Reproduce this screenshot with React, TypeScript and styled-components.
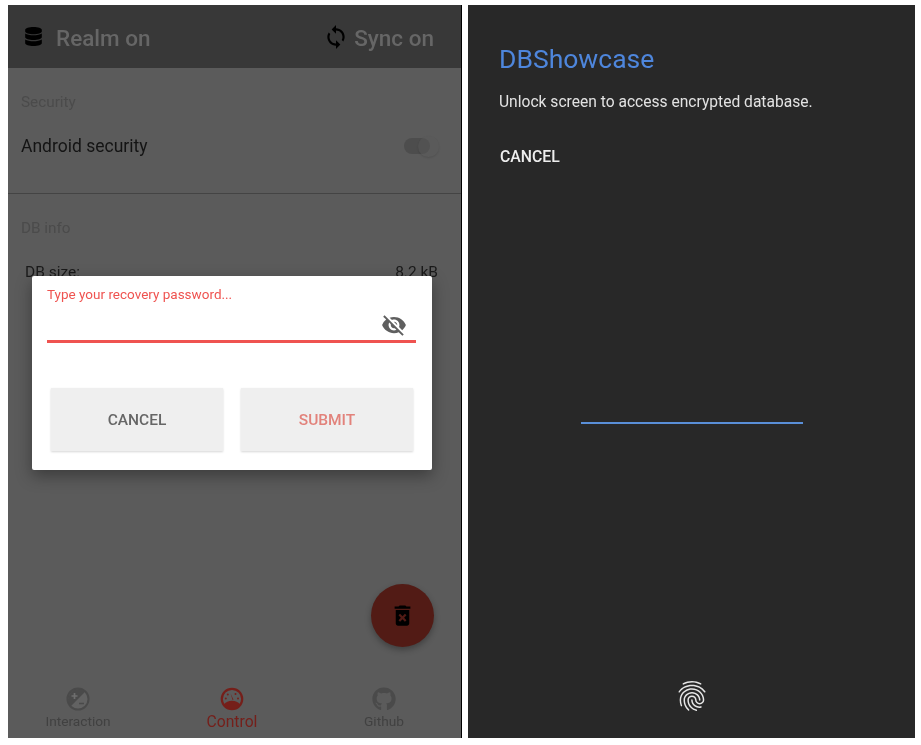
import React from "react";
import styled, { createGlobalStyle } from "styled-components";
import { FaDatabase, FaGithub } from "react-icons/fa";
import { MdDeleteForever, MdFingerprint, MdSync, MdVisibilityOff } from "react-icons/md";

const GlobalStyle = createGlobalStyle`
  html, body {
    margin: 0;
    padding: 0;
    background: #fff;
    font-family: Roboto, "Liberation Sans", sans-serif;
  }
`;

// the reference is an upscaled screenshot, hence the slight blur
const Page = styled.div`
  width: 921px;
  height: 745px;
  box-sizing: border-box;
  padding: 5px 6px 7px 8px;
  display: flex;
  gap: 6px;
  overflow: hidden;
  filter: blur(0.35px);
`;

// Left phone: app dimmed behind the recovery dialog
const ControlScreen = styled.div`
  position: relative;
  width: 454px;
  flex: none;
  box-sizing: border-box;
  border-right: 1px solid #000;
  background: #5b5b5b;
  display: flex;
  flex-direction: column;
`;

const Header = styled.header`
  height: 63px;
  flex: none;
  background: #383838;
  display: flex;
  align-items: center;
  justify-content: space-between;
  padding: 0 27px 0 16px;
  color: #000;
`;

const HeaderGroup = styled.div<{ $gap: number }>`
  display: flex;
  align-items: center;
  gap: ${(p) => p.$gap}px;
`;

const HeaderLabel = styled.span`
  font-size: 22.5px;
  font-weight: 500;
  color: #666;
  margin-top: 2px;
`;

const Section = styled.section`
  padding: 25px 13px 0;
`;

const SectionTitle = styled.div`
  font-size: 15.3px;
  line-height: 18px;
  color: #4b4b4b;
`;

const SettingRow = styled.div`
  display: flex;
  align-items: center;
  justify-content: space-between;
  margin-top: 23px;
  height: 24px;
`;

const SettingLabel = styled.span`
  font-size: 17.5px;
  color: #141414;
`;

const Toggle = styled.div`
  position: relative;
  width: 26px;
  height: 16px;
  margin-right: 18px;
  border-radius: 8px;
  background: #4d4d4d;
  &::after {
    content: "";
    position: absolute;
    top: -2px;
    right: -9px;
    width: 21px;
    height: 21px;
    border-radius: 50%;
    background: rgba(91, 91, 91, 0.4);
    box-shadow: 0 1px 2px rgba(0, 0, 0, 0.12);
  }
`;

const Divider = styled.hr`
  margin: 35px 0 0;
  border: none;
  border-top: 1px solid #444;
`;

const InfoRow = styled.div`
  display: flex;
  justify-content: space-between;
  margin-top: 25px;
  padding: 0 10px 0 4px;
  font-size: 15.5px;
  line-height: 20px;
  color: #1a1a1a;
`;

const BottomNav = styled.nav`
  margin-top: auto;
  display: grid;
  grid-template-columns: 140px 168px 136px;
  padding-bottom: 8px;
`;

const NavItem = styled.div<{ $active?: boolean }>`
  display: flex;
  flex-direction: column;
  align-items: center;
  gap: 2px;
  color: ${(p) => (p.$active ? "#751f1a" : "#414141")};
  font-size: ${(p) => (p.$active ? 15.7 : 13.7)}px;
  line-height: 17px;
`;

const NavIcon = styled.span<{ $active?: boolean }>`
  display: flex;
  height: 24px;
  color: ${(p) => (p.$active ? "#751f1a" : "#4a4a4a")};
`;

const Fab = styled.div`
  position: absolute;
  right: 27px;
  top: 579px;
  width: 63px;
  height: 63px;
  border-radius: 50%;
  background: #521b15;
  color: #000;
  display: flex;
  align-items: center;
  justify-content: center;
  box-shadow: 0 3px 6px rgba(0, 0, 0, 0.3);
`;

const Dialog = styled.div`
  position: absolute;
  left: 24px;
  top: 271px;
  width: 400px;
  height: 194px;
  box-sizing: border-box;
  padding: 11px 16px 0 15px;
  background: #fff;
  border-radius: 2px;
  box-shadow: 0 6px 16px rgba(0, 0, 0, 0.35);
`;

const FloatingLabel = styled.div`
  font-size: 13.5px;
  line-height: 15px;
  color: #ef5350;
`;

const PasswordField = styled.div`
  height: 38px;
  display: flex;
  align-items: flex-end;
  justify-content: flex-end;
  padding-right: 9px;
  padding-bottom: 2px;
  margin-top: -2px;
  border-bottom: 3px solid #ef5350;
  color: #5f5f5f;
`;

const DialogActions = styled.div`
  display: grid;
  grid-template-columns: 172px 172px;
  justify-content: space-between;
  margin-top: 45px;
  padding: 0 3px 0 4px;
`;

const DialogButton = styled.div<{ $danger?: boolean }>`
  height: 63px;
  background: #efefef;
  display: flex;
  align-items: center;
  justify-content: center;
  font-size: 15.5px;
  font-weight: 500;
  color: ${(p) => (p.$danger ? "#e2827b" : "#666")};
  box-shadow: 0 1px 2px rgba(0, 0, 0, 0.16);
`;

// Right phone: system lock prompt
const LockScreen = styled.div`
  width: 447px;
  flex: none;
  background: #282828;
  display: flex;
  flex-direction: column;
  padding: 36px 31px 24px;
  box-sizing: border-box;
`;

const LockTitle = styled.h1`
  margin: 0;
  font-size: 26.5px;
  line-height: 36px;
  font-weight: 400;
  color: #4e86dc;
`;

const LockMessage = styled.p`
  margin: 15px 0 0;
  font-size: 15.6px;
  line-height: 20px;
  color: #e2e2e2;
`;

const LockCancel = styled.div`
  margin-top: 35px;
  padding-left: 1px;
  font-size: 15.8px;
  line-height: 20px;
  font-weight: 500;
  color: #eee;
`;

const ProgressLine = styled.div`
  width: 222px;
  height: 2px;
  margin: 255px auto 0;
  background: #5a8fd8;
`;

const FingerprintWrap = styled.div`
  margin-top: auto;
  display: flex;
  justify-content: center;
  color: #e6e6e6;
`;

const ExposureIcon = () => (
  <svg width="24" height="24" viewBox="0 0 24 24">
    <circle cx="12" cy="12" r="10.5" fill="#626262" stroke="currentColor" strokeWidth="2" />
    <path d="M4.6 19.4A10.5 10.5 0 0 1 19.4 4.6Z" fill="currentColor" />
    <path d="M5.5 9h6M8.5 6v6" stroke="#6e6e6e" strokeWidth="1.7" />
    <path d="M13 16.5h5" stroke="currentColor" strokeWidth="1.5" />
  </svg>
);

const GaugeIcon = () => (
  <svg width="24" height="24" viewBox="0 0 24 24">
    <circle cx="12" cy="12" r="10.2" fill="none" stroke="currentColor" strokeWidth="2.2" />
    <path d="M4 17.5c1.8-2.6 4.6-3.8 8-3.8s6.200 1.200 8 3.800c-1.800 2.900-4.600 4.500-8 4.500s-6.200-1.600-8-4.500Z" fill="currentColor" />
    <path d="m12.500 13-1.900-6.500 2.900 6.200Z" fill="currentColor" />
    <circle cx="5.800" cy="11.500" r="1" fill="currentColor" />
    <circle cx="7.800" cy="7.500" r="1" fill="currentColor" />
    <circle cx="15.500" cy="7" r="1" fill="currentColor" />
    <circle cx="18" cy="11.500" r="1" fill="currentColor" />
  </svg>
);

const App: React.FC = () => (
  <>
    <GlobalStyle />
    <Page>
      <ControlScreen>
        <Header>
          <HeaderGroup $gap={13}>
            <FaDatabase size={19} />
            <HeaderLabel>Realm on</HeaderLabel>
          </HeaderGroup>
          <HeaderGroup $gap={5}>
            <MdSync size={26} />
            <HeaderLabel>Sync on</HeaderLabel>
          </HeaderGroup>
        </Header>

        <Section>
          <SectionTitle>Security</SectionTitle>
          <SettingRow>
            <SettingLabel>Android security</SettingLabel>
            <Toggle />
          </SettingRow>
        </Section>
        <Divider />
        <Section>
          <SectionTitle>DB info</SectionTitle>
          <InfoRow>
            <span>DB size:</span>
            <span>8.2 kB</span>
          </InfoRow>
        </Section>

        <BottomNav>
          <NavItem>
            <NavIcon><ExposureIcon /></NavIcon>
            Interaction
          </NavItem>
          <NavItem $active>
            <NavIcon $active><GaugeIcon /></NavIcon>
            Control
          </NavItem>
          <NavItem>
            <NavIcon><FaGithub size={24} /></NavIcon>
            Github
          </NavItem>
        </BottomNav>

        <Fab>
          <MdDeleteForever size={27} />
        </Fab>

        <Dialog>
          <FloatingLabel>Type your recovery password...</FloatingLabel>
          <PasswordField>
            <MdVisibilityOff size={26} />
          </PasswordField>
          <DialogActions>
            <DialogButton>CANCEL</DialogButton>
            <DialogButton $danger>SUBMIT</DialogButton>
          </DialogActions>
        </Dialog>
      </ControlScreen>

      <LockScreen>
        <LockTitle>DBShowcase</LockTitle>
        <LockMessage>Unlock screen to access encrypted database.</LockMessage>
        <LockCancel>CANCEL</LockCancel>
        <ProgressLine />
        <FingerprintWrap>
          <MdFingerprint size={36} />
        </FingerprintWrap>
      </LockScreen>
    </Page>
  </>
);

export default App;
